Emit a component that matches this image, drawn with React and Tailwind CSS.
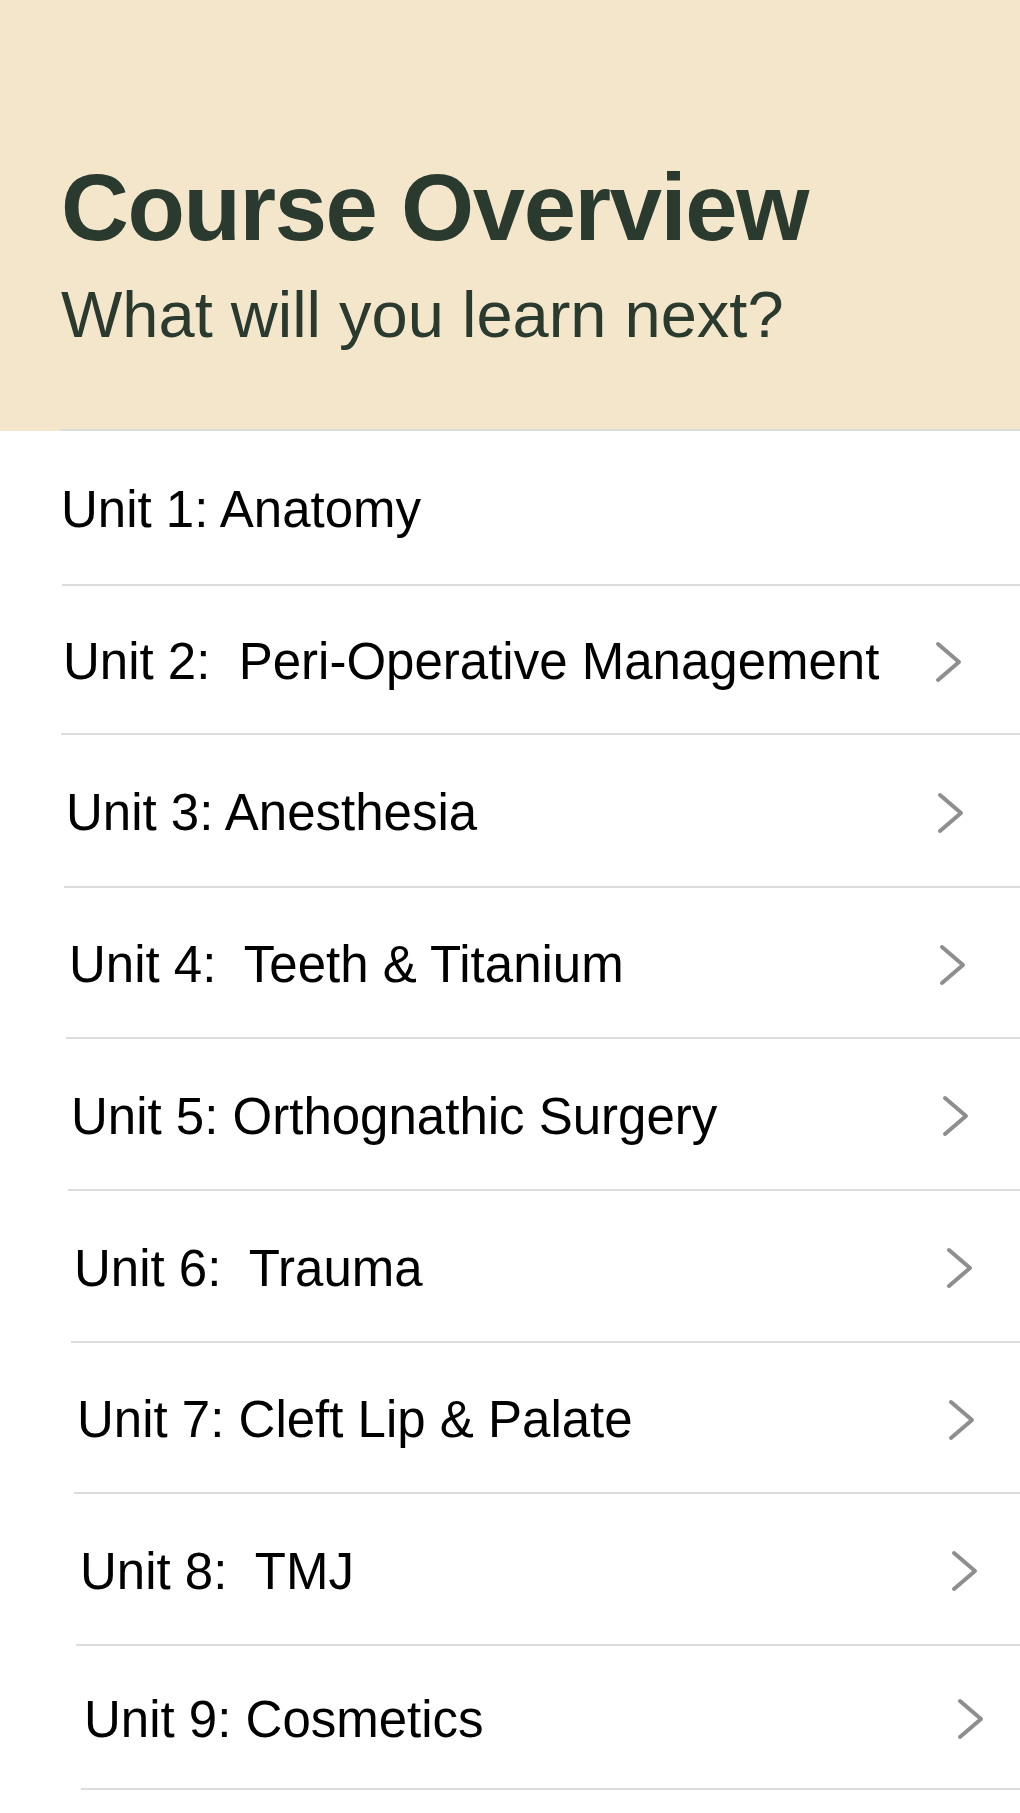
import React from "react";

const rows = [
  { label: "Unit 1: Anatomy", h: "h-[155px]", pl: "pl-[61px]", sep: "ml-[62px]", chev: false, mr: "" },
  { label: "Unit 2:  Peri-Operative Management", h: "h-[149px]", pl: "pl-[63px]", sep: "ml-[61px]", chev: true, mr: "mr-[58px]" },
  { label: "Unit 3: Anesthesia", h: "h-[153px]", pl: "pl-[66px]", sep: "ml-[64px]", chev: true, mr: "mr-[56px]" },
  { label: "Unit 4:  Teeth & Titanium", h: "h-[151px]", pl: "pl-[69px]", sep: "ml-[66px]", chev: true, mr: "mr-[54px]" },
  { label: "Unit 5: Orthognathic Surgery", h: "h-[152px]", pl: "pl-[71px]", sep: "ml-[68px]", chev: true, mr: "mr-[51px]" },
  { label: "Unit 6:  Trauma", h: "h-[152px]", pl: "pl-[74px]", sep: "ml-[71px]", chev: true, mr: "mr-[47px]" },
  { label: "Unit 7: Cleft Lip & Palate", h: "h-[151px]", pl: "pl-[77px]", sep: "ml-[74px]", chev: true, mr: "mr-[45px]" },
  { label: "Unit 8:  TMJ", h: "h-[152px]", pl: "pl-[80px]", sep: "ml-[76px]", chev: true, mr: "mr-[42px]" },
  { label: "Unit 9: Cosmetics", h: "h-[144px]", pl: "pl-[84px]", sep: "ml-[81px]", chev: true, mr: "mr-[36px]" },
];

function Chevron() {
  return (
    <svg width="27" height="42" viewBox="0 0 27 42" fill="none" className="shrink-0">
      <polyline
        points="3,3 24,21 3,39"
        stroke="#8e8e8e"
        strokeWidth="4"
        strokeLinecap="round"
        strokeLinejoin="round"
      />
    </svg>
  );
}

export default function App() {
  return (
    <div className="w-[1020px] min-h-[1813px] bg-white font-['Liberation_Sans',Arial,sans-serif]">
      <header className="h-[431px] bg-[#f3e6cb] flex flex-col">
        <div className="pt-[161px] pl-[61px]">
          <h1 className="text-[94px] leading-none font-bold tracking-[-0.015em] text-[#2a3a2e]">
            Course Overview
          </h1>
          <p className="mt-[27px] text-[65px] leading-none text-[#2a3a2e]">
            What will you learn next?
          </p>
        </div>
        <div className="mt-auto ml-[60px] h-[2px] bg-[#dcdcdc]" />
      </header>
      <ul>
        {rows.map((r) => (
          <li key={r.label} className={`${r.h} flex flex-col`}>
            <div className={`flex-1 flex items-center pt-[4px] ${r.pl}`}>
              <span className="whitespace-pre text-[51px] leading-none text-black">{r.label}</span>
              {r.chev && (
                <span className={`ml-auto ${r.mr} flex items-center`}>
                  <Chevron />
                </span>
              )}
            </div>
            <div className={`${r.sep} h-[2px] bg-[#dcdcdc]`} />
          </li>
        ))}
      </ul>
    </div>
  );
}
